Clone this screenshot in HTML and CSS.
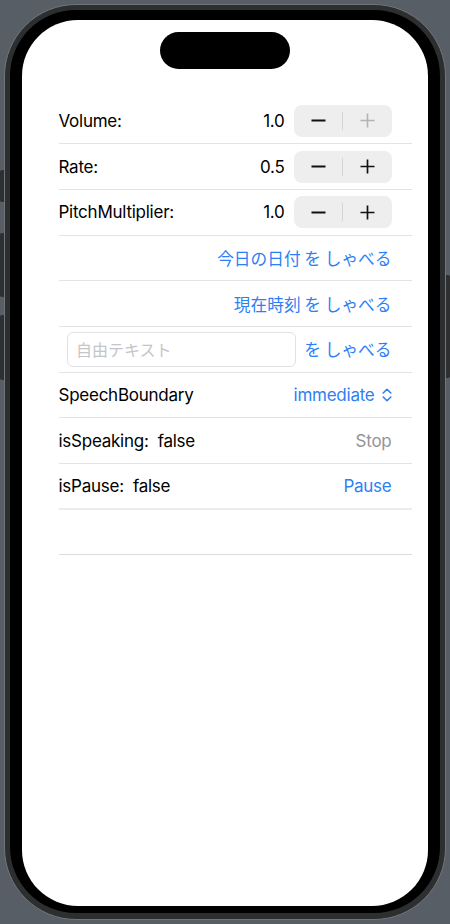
FILE: index.html
```html
<!DOCTYPE html>
<html lang="ja">
<head>
<meta charset="utf-8">
<title>Speech</title>
<link rel="stylesheet" href="styles.css">
</head>
<body>
<div class="phone">
  <span class="side side-action"></span>
  <span class="side side-volup"></span>
  <span class="side side-voldown"></span>
  <span class="side side-power"></span>
  <div class="bezel">
    <div class="screen">
      <div class="island"></div>
      <div class="list">
        <div class="row">
          <span class="label">Volume:</span>
          <span class="value">1.0</span>
          <div class="stepper">
            <span class="step"><svg width="15" height="15" viewBox="0 0 15 15"><path d="M0.5 7.5H14.5" stroke="#111" stroke-width="1.9" fill="none"/></svg></span>
            <span class="step-div"></span>
            <span class="step"><svg width="15" height="15" viewBox="0 0 15 15"><path d="M0.5 7.5H14.5M7.5 0.5V14.5" stroke="#b3b3b5" stroke-width="1.6" fill="none"/></svg></span>
          </div>
        </div>
        <div class="row">
          <span class="label">Rate:</span>
          <span class="value">0.5</span>
          <div class="stepper">
            <span class="step"><svg width="15" height="15" viewBox="0 0 15 15"><path d="M0.5 7.5H14.5" stroke="#111" stroke-width="1.9" fill="none"/></svg></span>
            <span class="step-div"></span>
            <span class="step"><svg width="15" height="15" viewBox="0 0 15 15"><path d="M0.5 7.5H14.5M7.5 0.5V14.5" stroke="#111" stroke-width="1.7" fill="none"/></svg></span>
          </div>
        </div>
        <div class="row">
          <span class="label">PitchMultiplier:</span>
          <span class="value">1.0</span>
          <div class="stepper">
            <span class="step"><svg width="15" height="15" viewBox="0 0 15 15"><path d="M0.5 7.5H14.5" stroke="#111" stroke-width="1.9" fill="none"/></svg></span>
            <span class="step-div"></span>
            <span class="step"><svg width="15" height="15" viewBox="0 0 15 15"><path d="M0.5 7.5H14.5M7.5 0.5V14.5" stroke="#111" stroke-width="1.7" fill="none"/></svg></span>
          </div>
        </div>
        <div class="row row-end">
          <span class="link jp">今日の日付 を しゃべる</span>
        </div>
        <div class="row row-end">
          <span class="link jp">現在時刻 を しゃべる</span>
        </div>
        <div class="row">
          <input class="field" type="text" placeholder="自由テキスト">
          <span class="link jp push">を しゃべる</span>
        </div>
        <div class="row">
          <span class="label">SpeechBoundary</span>
          <span class="link picker">immediate<svg class="chev" width="10" height="14" viewBox="0 0 10 14"><path d="M1.2 5L5 1.3L8.8 5M1.2 9L5 12.7L8.8 9" stroke="currentColor" stroke-width="1.6" fill="none" stroke-linecap="round" stroke-linejoin="round"/></svg></span>
        </div>
        <div class="row">
          <span class="label pre">isSpeaking:  false</span>
          <span class="muted">Stop</span>
        </div>
        <div class="row row-thick">
          <span class="label pre">isPause:  false</span>
          <span class="link">Pause</span>
        </div>
        <div class="row row-empty"></div>
      </div>
    </div>
  </div>
</div>
</body>
</html>
```

FILE: styles.css
```css
html, body {
  margin: 0;
  padding: 0;
  background: #575e66;
  width: 450px;
  height: 924px;
  overflow: hidden;
}

body {
  font-family: "Inter", "Noto Sans CJK JP", sans-serif;
  color: #000;
}

.phone {
  position: relative;
  box-sizing: border-box;
  margin: 4px 0 0 4px;
  width: 442px;
  height: 916px;
  border: 1px solid #72767b;
  border-radius: 72px;
  background: #2d2e30;
  padding: 5px 5px 6px 5px;
}

.side {
  position: absolute;
  display: block;
  width: 4px;
  background: #2e2f31;
}

.side-action { left: -5px; top: 165px; height: 32px; border-radius: 2px 0 0 2px; }
.side-volup { left: -5px; top: 228px; height: 64px; border-radius: 2px 0 0 2px; }
.side-voldown { left: -5px; top: 310px; height: 65px; border-radius: 2px 0 0 2px; }
.side-power { right: -5px; top: 270px; height: 103px; border-radius: 0 2px 2px 0; }

.bezel {
  box-sizing: border-box;
  height: 100%;
  background: #000;
  border-radius: 66px;
  padding: 10px 12px 7px 12px;
}

.screen {
  box-sizing: border-box;
  height: 100%;
  background: #fff;
  border-radius: 56px;
  overflow: hidden;
  padding-top: 12px;
}

.island {
  width: 130px;
  height: 37px;
  margin: 0 auto;
  border-radius: 19px;
  background: #000;
}

.list {
  margin-top: 29.6px;
  padding-left: 36.5px;
  padding-right: 16px;
}

.row {
  display: flex;
  align-items: center;
  box-sizing: border-box;
  height: 45.7px;
  border-bottom: 1px solid #e3e3e5;
  padding-right: 20.5px;
  font-size: 17px;
  letter-spacing: -0.25px;
}

.row-end {
  justify-content: flex-end;
}

.row-thick {
  border-bottom: 2px solid #ececee;
}

.row-empty {
  border-bottom: 1px solid #dcdcde;
}

.label {
  flex: 1;
}

.pre {
  white-space: pre;
}

.value {
  margin-right: 9.5px;
}

.stepper {
  display: flex;
  align-items: center;
  width: 97.5px;
  height: 32px;
  border-radius: 8px;
  background: #eeeeef;
}

.step {
  flex: 1;
  display: flex;
  align-items: center;
  justify-content: center;
  height: 100%;
}

.step-div {
  width: 1px;
  height: 18px;
  background: #d5d5d7;
}

.link {
  color: #2d7ff6;
}

.muted {
  color: #949498;
}

.jp {
  font-family: "Noto Sans CJK JP", sans-serif;
  font-size: 16.7px;
  letter-spacing: 0;
}

.push {
  margin-left: auto;
}

.field {
  box-sizing: border-box;
  margin: 0 0 0 8px;
  width: 229.5px;
  height: 35px;
  border: 1px solid #e2e2e4;
  border-radius: 6px;
  padding: 0 0 0 8.5px;
  font-family: "Noto Sans CJK JP", sans-serif;
  font-size: 16px;
  outline: none;
  background: #fff;
}

.field::placeholder {
  color: #c5c5c8;
}

.picker {
  display: flex;
  align-items: center;
}

.chev {
  margin-left: 7px;
}
```
